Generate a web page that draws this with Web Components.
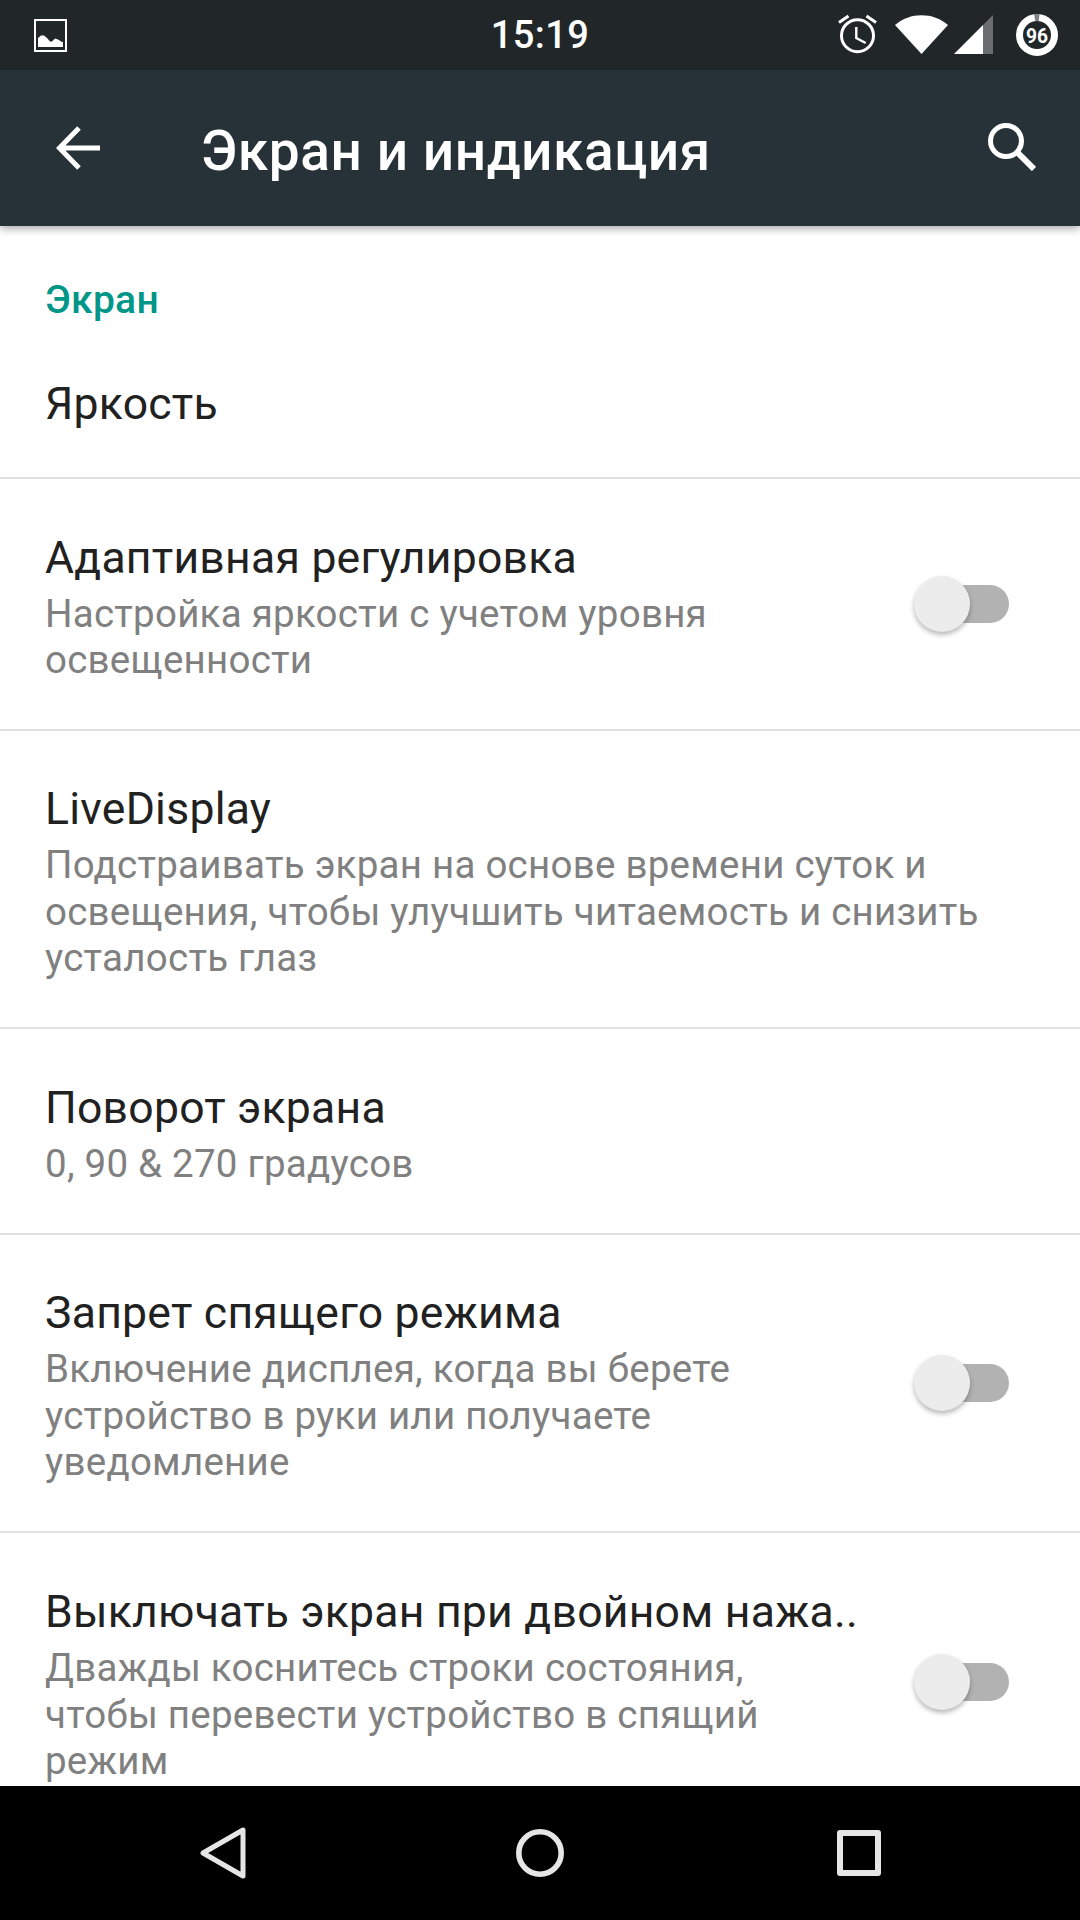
<!DOCTYPE html>
<html lang="ru">
<head>
<meta charset="utf-8">
<style>
  html, body { margin: 0; height: 100%; }
  body { font-family: Roboto, "Noto Sans", sans-serif; background: #fff; }
  settings-screen { height: 1920px; }
</style>
</head>
<body>
<settings-screen>
  <status-bar time="15:19"></status-bar>
  <app-bar title="Экран и индикация"></app-bar>
  <settings-list>
    <pref-header>Экран</pref-header>
    <pref-item style="--row-h:153px;--pad-top:5px" title="Яркость"></pref-item>
    <pref-item style="--row-h:252px" title="Адаптивная регулировка" summary="Настройка яркости с учетом уровня освещенности" toggle></pref-item>
    <pref-item style="--row-h:298px" title="LiveDisplay" summary="Подстраивать экран на основе времени суток и освещения, чтобы улучшить читаемость и снизить усталость глаз"></pref-item>
    <pref-item style="--row-h:206px" title="Поворот экрана" summary="0, 90 &amp; 270 градусов"></pref-item>
    <pref-item style="--row-h:298px" title="Запрет спящего режима" summary="Включение дисплея, когда вы берете устройство в руки или получаете уведомление" toggle></pref-item>
    <pref-item style="--row-h:298px;--pad-top:2px" title="Выключать экран при двойном нажа.." summary="Дважды коснитесь строки состояния, чтобы перевести устройство в спящий режим" toggle></pref-item>
  </settings-list>
  <nav-bar></nav-bar>
</settings-screen>

<script>
class SettingsScreen extends HTMLElement {
  constructor() {
    super()
    this.attachShadow({ mode: 'open' }).innerHTML = `<style>
      :host { display: flex; flex-direction: column; width: 1080px; overflow: hidden; }
      </style><slot></slot>`
  }
}

class StatusBar extends HTMLElement {
  constructor() {
    super()
    this.attachShadow({ mode: 'open' }).innerHTML = `<style>
      :host { display: grid; grid-template-columns: 1fr auto 1fr; align-items: center; flex: 0 0 70px; height: 70px; background: #212729; color: #fff; padding: 0 22px; box-sizing: border-box; }
      .left, .right { display: flex; align-items: center; }
      .left { padding-left: 12px; }
      .right { justify-content: flex-end; }
      .time { font-size: 38px; font-weight: 500; letter-spacing: .4px; }
      svg { display: block; }
      </style>
      <div class="left">
        <svg width="33" height="33" viewBox="0 0 33 33"><path fill="none" stroke="#fff" stroke-width="2" d="M1 1h31v31H1z"/><path fill="#fff" d="M4 28v-9l3-2.500h3l3 2.500 3 3.500h2l3-3 3 1 4 2.500h1v5z"/></svg>
      </div>
      <div class="time">${this.getAttribute('time')}</div>
      <div class="right">
        <svg width="40" height="40" viewBox="0 0 40 40" style="margin:0 17px 2px 0"><g fill="none" stroke="#fff" stroke-width="3"><circle cx="19.500" cy="21.700" r="16"/><path d="M18.300 13v11l9.400 5" stroke-width="2.400"/><path d="M1 8.500 10.500 2M38 8.500 28.500 2"/></g></svg>
        <svg width="54" height="40" viewBox="0 0 54 40" style="margin-right:5px"><path fill="#fff" d="M0 10C15-3 38-3 53 10L26.500 39z"/></svg>
        <svg width="39" height="40" viewBox="0 0 39 40" style="margin-right:23px"><path fill="#fff" d="M0 39 29 10v29z"/><path fill="#fff" fill-opacity=".33" d="M29 10 39 0v39H29z"/></svg>
        <svg width="42" height="42" viewBox="0 0 42 42"><circle cx="21" cy="21" r="17.500" fill="none" stroke="#fff" stroke-width="7"/><path d="M18 .3a21 21 0 0 1 5.500-.1l-.8 7a14 14 0 0 0-3.300 0z" fill="#7d8285"/><text x="21" y="29" text-anchor="middle" font-family="Roboto,sans-serif" font-size="21" font-weight="700" fill="#fff" textLength="22" lengthAdjust="spacingAndGlyphs">96</text></svg>
      </div>`
  }
}

class AppBar extends HTMLElement {
  constructor() {
    super()
    this.attachShadow({ mode: 'open' }).innerHTML = `<style>
      :host { display: flex; align-items: center; flex: 0 0 156px; height: 156px; background: #263238; color: #fff; position: relative; z-index: 2; box-shadow: 0 3px 8px rgba(0,0,0,.32); padding: 0 44px 0 56px; box-sizing: border-box; }
      h1 { flex: 1; margin: 6px 0 0 101px; font-size: 55px; font-weight: 500; letter-spacing: .55px; }
      svg { display: block; }
      </style>
      <svg width="44" height="44" viewBox="0 0 44 44"><path fill="none" stroke="#fff" stroke-width="5" d="M44 22H4M23 2 3.500 22 23 42"/></svg>
      <h1>${this.getAttribute('title')}</h1>
      <svg width="48" height="48" viewBox="0 0 48 48" style="margin-bottom:2px"><circle cx="18" cy="18" r="15.500" fill="none" stroke="#fff" stroke-width="5"/><path d="M29 29l17 17" stroke="#fff" stroke-width="6"/></svg>`
  }
}

class SettingsList extends HTMLElement {
  constructor() {
    super()
    this.attachShadow({ mode: 'open' }).innerHTML = `<style>
      :host { display: block; flex: 1; min-height: 0; overflow: hidden; background: #fff; }
      </style><slot></slot>`
  }
}

class PrefHeader extends HTMLElement {
  constructor() {
    super()
    this.attachShadow({ mode: 'open' }).innerHTML = `<style>
      :host { display: block; padding: 50px 45px 0; height: 50px; font-size: 39px; font-weight: 500; line-height: 49px; color: #009688; letter-spacing: .3px; }
      </style><slot></slot>`
  }
}

class PrefItem extends HTMLElement {
  constructor() {
    super()
    const summary = this.getAttribute('summary')
    const toggle = this.hasAttribute('toggle')
    this.attachShadow({ mode: 'open' }).innerHTML = `<style>
      :host { display: flex; align-items: center; box-sizing: border-box; height: var(--row-h, auto); padding: var(--pad-top, 0px) 71px 0 45px; border-bottom: 2px solid #e0e0e0; }
      .text { flex: 1; min-width: 0; }
      .title { font-size: 44.500px; line-height: 66px; color: #212121; letter-spacing: .25px; white-space: nowrap; }
      .summary { font-size: 38.500px; line-height: 46.500px; color: #808080; letter-spacing: .25px; }
      </style>
      <div class="text">
        <div class="title">${this.getAttribute('title')}</div>
        ${summary ? `<div class="summary">${summary}</div>` : ''}
      </div>
      ${toggle ? '<toggle-switch></toggle-switch>' : ''}`
  }
}

class ToggleSwitch extends HTMLElement {
  constructor() {
    super()
    this.attachShadow({ mode: 'open' }).innerHTML = `<style>
      :host { display: block; position: relative; flex: 0 0 95px; width: 95px; height: 56px; margin-left: 64px; }
      .track { position: absolute; left: 11px; right: 0; top: 9px; height: 38px; border-radius: 19px; background: #b2b2b2; }
      .thumb { position: absolute; left: 0; top: 0; width: 56px; height: 56px; border-radius: 50%; background: #ececec; box-shadow: 0 3px 5px rgba(0,0,0,.28); }
      </style><div class="track"></div><div class="thumb"></div>`
  }
}

class NavBar extends HTMLElement {
  constructor() {
    super()
    this.attachShadow({ mode: 'open' }).innerHTML = `<style>
      :host { display: flex; flex: 0 0 134px; height: 134px; background: #000; box-sizing: border-box; padding-left: 200px; align-items: center; }
      svg { display: block; }
      </style>
      <svg width="46" height="52" viewBox="0 0 46 52" style="margin-right:270px"><path fill="none" stroke="#e6e6e6" stroke-width="5" stroke-linejoin="round" d="M43 3v46L3 26z"/></svg>
      <svg width="48" height="48" viewBox="0 0 48 48" style="margin-right:273px"><circle cx="24" cy="24" r="21.200" fill="none" stroke="#e6e6e6" stroke-width="5.600"/></svg>
      <svg width="44" height="46" viewBox="0 0 44 46"><path fill="none" stroke="#e6e6e6" stroke-width="6" stroke-linejoin="round" d="M3 3h38v40H3z"/></svg>`
  }
}

customElements.define('settings-screen', SettingsScreen)
customElements.define('status-bar', StatusBar)
customElements.define('app-bar', AppBar)
customElements.define('settings-list', SettingsList)
customElements.define('pref-header', PrefHeader)
customElements.define('pref-item', PrefItem)
customElements.define('toggle-switch', ToggleSwitch)
customElements.define('nav-bar', NavBar)
</script>
</body>
</html>
